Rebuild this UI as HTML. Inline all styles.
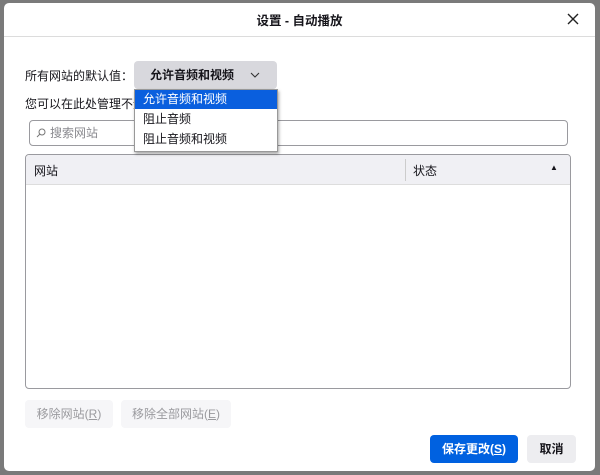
<!DOCTYPE html>
<html><head><meta charset="utf-8"><style>
*{box-sizing:border-box;margin:0;padding:0}
body{width:600px;height:475px;background:#7a7a7a;position:relative;overflow:hidden;font-family:"Liberation Sans","Noto Sans CJK SC",sans-serif;font-size:12px;color:#15141a}
.dlg{position:absolute;left:4px;top:3px;width:591px;height:468px;background:#fff;border-radius:5px}
.abs{position:absolute}
.title{left:0;width:100%;top:7px;text-align:center;font-weight:bold;font-size:12.5px}
.hline{left:0;width:100%;top:33px;height:1px;background:#dcdcdc}
.btn{position:absolute;border-radius:4px;text-align:center;font-size:12px}
</style></head><body>
<div class="dlg">
<div class="abs title">设置 - 自动播放</div>
<svg class="abs" style="left:562px;top:9px" width="14" height="14"><path d="M2 2L12 12M12 2L2 12" stroke="#222" stroke-width="1.4"/></svg>
<div class="abs hline"></div>
<div class="abs" style="left:21px;top:64px">所有网站的默认值：</div>
<div class="btn" style="left:130px;top:58px;width:143px;height:28px;background:#d8d8dd;font-weight:bold;line-height:28px;text-align:left;padding-left:16px">允许音频和视频
<svg class="abs" style="left:116px;top:11px" width="10" height="6"><path d="M1 1L5 5L9 1" stroke="#333" fill="none" stroke-width="1.1"/></svg></div>
<div class="abs" style="left:21px;top:92px">您可以在此处管理不遵循默认设置的网站。</div>
<div class="abs" style="left:25px;top:117px;width:539px;height:26px;border:1px solid #9a9a9f;border-radius:4px;color:#8a8a8f;line-height:24px;padding-left:20px">搜索网站
<svg class="abs" style="left:6px;top:7px" width="10" height="10"><circle cx="6" cy="4" r="3" stroke="#777" fill="none"/><path d="M4 6L1 9" stroke="#777"/></svg></div>
<div class="abs" style="left:21px;top:151px;width:546px;height:235px;border:1px solid #9a9a9f;border-radius:4px;overflow:hidden">
<div class="abs" style="left:0;top:0;width:100%;height:30px;background:#f0f0f4;border-bottom:1px solid #ddd"></div>
<div class="abs" style="left:8px;top:7px">网站</div>
<div class="abs" style="left:379px;top:4px;width:1px;height:22px;background:#ccc"></div>
<div class="abs" style="left:387px;top:7px">状态</div>
<div class="abs" style="left:524px;top:8px;font-size:8px">▲</div>
</div>
<div class="btn" style="left:21px;top:397px;width:88px;height:28px;background:#f6f6f8;color:#9a9a9e;line-height:28px">移除网站(<u>R</u>)</div>
<div class="btn" style="left:117px;top:397px;width:110px;height:28px;background:#f6f6f8;color:#9a9a9e;line-height:28px">移除全部网站(<u>E</u>)</div>
<div class="btn" style="left:426px;top:432px;width:88px;height:28px;background:#0061e0;color:#fff;font-weight:bold;line-height:28px">保存更改(<u>S</u>)</div>
<div class="btn" style="left:523px;top:432px;width:49px;height:28px;background:#ededf0;font-weight:bold;line-height:28px">取消</div>
<div class="abs" style="left:130px;top:86px;width:144px;height:63px;background:#fff;border:1px solid #999;box-shadow:1px 2px 3px rgba(0,0,0,.35)">
<div style="height:19px;background:#0a5fde;color:#fff;padding-left:8px;line-height:19px">允许音频和视频</div>
<div style="height:20px;padding-left:8px;line-height:20px">阻止音频</div>
<div style="height:20px;padding-left:8px;line-height:20px">阻止音频和视频</div>
</div>
</div>
</body></html>
